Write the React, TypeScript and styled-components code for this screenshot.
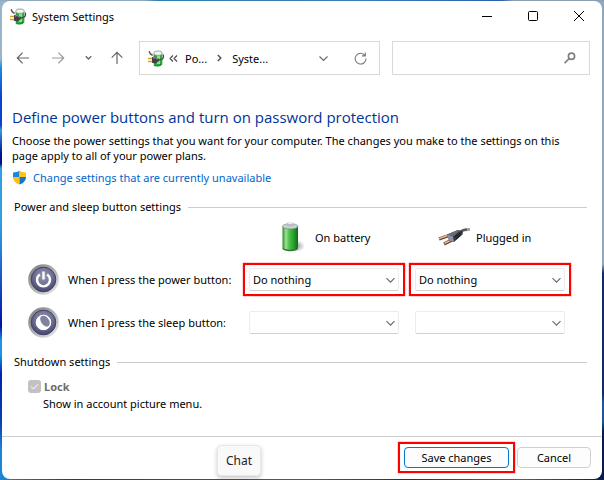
import React from "react";
import styled, { createGlobalStyle } from "styled-components";

const GlobalStyle = createGlobalStyle`
  *, *::before, *::after { box-sizing: border-box; }
  body {
    margin: 0;
    font-family: "Noto Sans", "Open Sans", sans-serif;
    font-size: 11px;
    line-height: 15px;
    color: #000;
  }
  button, input, select { font: inherit; color: inherit; }
  svg { flex: none; }
`;

const Desktop = styled.div`
  min-height: 100vh;
  display: flex;
  padding: 1px 2px;
  background:
    linear-gradient(#8ea9bd 0 55%, #0b2a66 57% 82%, #1d5596 84% 88%, #0a1c4c 90%) right / 50% calc(100% - 2px) no-repeat,
    linear-gradient(#9ab4c9 0 12%, #1c8ce0 14%, #0c42d0 20% 26%, #3a9ade 27%, #00128a 32%, #00128a 34%, #2f9fe0 35% 46%, #2a7fd8 52%, #0010a8 68%, #1a96e4 71% 74%, #0020b0 78%, #0a3fb0 88%, #1c86d4 94%) left / 50% calc(100% - 2px) no-repeat,
    linear-gradient(90deg, #8fa9bf 0 24%, #2f7fae 26%, #3c7ab8 60%, #2c5fae 83%, #8b9fb2 85%) top / 100% 50% no-repeat,
    linear-gradient(90deg, #2a80c4, #2c3866 12%, #3a5c9c 50%, #22305c 68%, #2f68ae 86%, #101c40);
`;

const Window = styled.main`
  flex: 1;
  min-width: 0;
  display: flex;
  flex-direction: column;
  background: #fff;
  border-radius: 8px;
`;

const TitleBar = styled.header`
  display: flex;
  align-items: center;
  height: 30px;
  padding-left: 8px;
`;

const WindowTitle = styled.span`
  flex: 1;
  margin-left: 5px;
`;

const PlainButton = styled.button<{ $width: number }>`
  width: ${(p) => p.$width}px;
  height: 28px;
  padding: 0;
  border: 0;
  background: transparent;
  display: flex;
  flex: none;
  align-items: center;
  justify-content: center;
`;

const NavBar = styled.nav`
  display: flex;
  align-items: center;
  padding: 10px 12px 0 6px;
`;

const AddressBar = styled.div`
  flex: 241 1 241px;
  min-width: 0;
  height: 34px;
  margin-left: 4px;
  display: flex;
  align-items: center;
  padding-left: 8px;
  border: 1px solid #d9d9d9;
`;

const Crumb = styled.a`
  color: #000;
  text-decoration: none;
  white-space: nowrap;
`;

const Separator = styled.span`
  display: flex;
  justify-content: center;
  width: 25px;
`;

const Overflow = styled(Separator)`
  width: 20px;
  padding-right: 3px;
`;

const Spacer = styled.span`
  flex: 1;
`;

const SearchBox = styled.label`
  flex: 198 1 198px;
  min-width: 0;
  height: 34px;
  margin-left: 12px;
  display: flex;
  align-items: center;
  padding-right: 13px;
  border: 1px solid #d9d9d9;
`;

const SearchInput = styled.input`
  flex: 1;
  min-width: 0;
  border: 0;
  outline: 0;
  padding: 0 8px;
  background: transparent;
`;

const Content = styled.section`
  flex: 1;
  padding: 30px 12px 24px 10px;
`;

const Heading = styled.h1`
  margin: 0;
  font-family: "Open Sans", sans-serif;
  font-size: 15px;
  line-height: 24px;
  font-weight: 400;
  color: #003399;
`;

const Intro = styled.p`
  margin: 4px 16px 0 0;
`;

const AdminLink = styled.a`
  display: flex;
  align-items: center;
  gap: 6px;
  margin-top: 7px;
  color: #0066cc;
  text-decoration: none;
`;

const SectionTitle = styled.h2<{ $top: number }>`
  display: flex;
  align-items: center;
  gap: 7px;
  margin: ${(p) => p.$top}px 3px 0 2px;
  font-size: 11px;
  line-height: 16px;
  font-weight: 400;

  &::after {
    content: "";
    flex: 1;
    height: 1px;
    background: #cdcdcd;
  }
`;

const SettingsGrid = styled.div`
  display: grid;
  grid-template-columns: 205px minmax(0, 150px) minmax(0, 150px);
  grid-template-rows: 42px 43px 43px;
  column-gap: 16px;
  align-items: center;
  margin: 1px 0 0 16px;
`;

const ColumnHeader = styled.div<{ $indent: number; $gap: number }>`
  display: flex;
  align-items: center;
  gap: ${(p) => p.$gap}px;
  padding-left: ${(p) => p.$indent}px;
  white-space: nowrap;
`;

const RowLabel = styled.div`
  display: flex;
  align-items: center;
  gap: 8px;
  white-space: nowrap;
`;

const Highlighted = styled.div<{ $on?: boolean }>`
  position: relative;
  min-width: 0;

  &::after {
    content: "";
    display: ${(p) => (p.$on ? "block" : "none")};
    position: absolute;
    inset: -5px -6px;
    border: 2px solid #ff0000;
    box-shadow: 0 0 1px #ff0000;
    pointer-events: none;
  }
`;

const Select = styled.select`
  display: block;
  width: 100%;
  height: 23px;
  padding: 0 24px 0 3px;
  appearance: none;
  border: 1px solid #ececec;
  border-bottom-color: #d0d0d0;
  border-radius: 2px;
  background: #fff;
  opacity: 1;
`;

const SelectArrow = styled.svg`
  position: absolute;
  right: 4px;
  top: 9px;
  pointer-events: none;
`;

const LockLabel = styled.label`
  display: flex;
  align-items: center;
  gap: 3px;
  margin: 9px 0 0 16px;
  font-weight: 700;
  color: #6d6d6d;
`;

const Checkbox = styled.input`
  appearance: none;
  width: 13px;
  height: 13px;
  margin: 0;
  border-radius: 3px;
  background: #c2c2c2 url("data:image/svg+xml,%3Csvg xmlns='http://www.w3.org/2000/svg' viewBox='0 0 13 13'%3E%3Cpath d='M3 6.5 5.5 9 10 4.3' fill='none' stroke='white'/%3E%3C/svg%3E");
`;

const LockHint = styled.p`
  margin: 2px 0 0 31px;
`;

const Footer = styled.footer`
  position: relative;
  display: flex;
  justify-content: flex-end;
  gap: 8px;
  padding: 10px 11px 11px;
  border-top: 1px solid #cdcdcd;
`;

const ActionButton = styled.button<{ $width: number; $primary?: boolean }>`
  display: block;
  width: ${(p) => p.$width}px;
  height: 21px;
  padding: 0;
  border: 1px solid ${(p) => (p.$primary ? "#0078d4" : "#d0d0d0")};
  border-radius: 4px;
  background: #fdfdfd;
  white-space: nowrap;
`;

const Tooltip = styled.div`
  position: absolute;
  left: 215px;
  top: 8px;
  padding: 7px 8px;
  border-radius: 4px;
  background: #f9f9f9;
  color: #222;
  font-size: 12px;
  border: 1px solid #e8e8e8;
  box-shadow: 0 2px 4px rgba(0, 0, 0, 0.22);
`;

const PowerOptionsIcon = () => (
  <svg width="17" height="17" viewBox="0 0 17 17" aria-hidden="true">
    <path d="M6 3.5v10c0 3 8 3 8 0v-10z" fill="#26b13c" stroke="#5f8767" strokeWidth=".8" />
    <path d="M9 5h3v9H9z" fill="#88e28e" />
    <ellipse cx="10" cy="3.2" rx="4.2" ry="2.2" fill="#eef4ef" stroke="#849087" strokeWidth=".8" />
    <path d="M1.2 1.2c.3 2.2 1.4 3.4 3.5 4.2" fill="none" stroke="#555" strokeWidth="1.3" />
    <path d="M0 8.5h5M0 11.5h5" stroke="#d9a21b" strokeWidth="1.6" />
    <path d="M4 7.2 7 6.6l4 2.4v2L7.5 13.4l-3.500-.6z" fill="#3f4144" />
    <path d="M5 8 7.500 7.600l2.500 1.600" stroke="#a4a8aa" fill="none" />
    <path d="M11 10c5-.4 5-3.500 4.200-5.400" fill="none" stroke="#4b504c" strokeWidth="1.3" />
    <path d="M6 14.600c1 1.700 6 1.700 7.600-.8" fill="none" stroke="#10962c" strokeWidth="1.6" />
  </svg>
);

const Arrow = ({ rotate = 0, color }: { rotate?: number; color: string }) => (
  <svg width="14" height="14" viewBox="0 0 14 14" fill="none" stroke={color} strokeWidth="1.2" aria-hidden="true">
    <path d="M13 7H1.3M6.6 1.7 1.3 7l5.3 5.3" transform={`rotate(${rotate} 7 7)`} />
  </svg>
);

const ShieldIcon = () => (
  <svg width="15" height="15" viewBox="0 0 15 15" aria-hidden="true">
    <path d="M7.5.5C5.8 2 3.6 2.4 1 2.4V7h6.5z" fill="#1c86dc" />
    <path d="M7.5.5C9.2 2 11.4 2.4 14 2.4V7H7.5z" fill="#fcc515" />
    <path d="M1 7c.2 4 2.8 6.2 6.5 7.6V7z" fill="#fcbf12" />
    <path d="M14 7c-.2 4-2.8 6.2-6.5 7.6V7z" fill="#1676c8" />
  </svg>
);

const BatteryIcon = () => (
  <svg width="24" height="32" viewBox="0 0 24 32" aria-hidden="true">
    <defs>
      <linearGradient id="cell">
        <stop offset="0" stopColor="#2c8a2a" />
        <stop offset=".22" stopColor="#9be491" />
        <stop offset=".42" stopColor="#4fc14b" />
        <stop offset=".75" stopColor="#239d2a" />
        <stop offset="1" stopColor="#14661c" />
      </linearGradient>
      <radialGradient id="shade">
        <stop offset="0" stopColor="#777" stopOpacity=".7" />
        <stop offset="1" stopColor="#777" stopOpacity="0" />
      </radialGradient>
    </defs>
    <ellipse cx="16" cy="25" rx="8" ry="6" fill="url(#shade)" />
    <path d="M1.5 5v22c1 3.6 14.5 3.6 15.5 0V5z" fill="url(#cell)" />
    <path d="M1.5 26c1 3.6 14.5 3.6 15.5 0v1.5c-1 3.6-14.5 3.6-15.5 0z" fill="#347339" />
    <ellipse cx="9.2" cy="5.3" rx="7.7" ry="2.6" fill="#cdd2d6" stroke="#7d8b80" strokeWidth=".7" />
    <path d="M5 4.5 6.500 1.800c1.500-1 4-1 5.500 0l1.500 2.700c-2 1.500-6.500 1.500-8.500 0z" fill="#b9bdc8" />
    <ellipse cx="9.2" cy="2" rx="2.7" ry="1" fill="#eef0f3" />
  </svg>
);

const PlugIcon = () => (
  <svg width="32" height="18" viewBox="0 0 32 18" aria-hidden="true">
    <path d="M22 4c3-3 6-2.6 10-2.5" fill="none" stroke="#a5a5aa" strokeWidth="3" />
    <path d="M22 4.5c2.5-2.6 4-3 7-3" fill="none" stroke="#55565c" strokeWidth="2" />
    <path d="m1 11 10-3.5M6 16l9-4.5" stroke="#704331" strokeWidth="3.4" />
    <path d="m1 10.6 9-3.3M6.5 15.3l8-4" stroke="#f0c4a5" strokeWidth="1.3" />
    <path d="M9 6.5 20 2l5 1.500-.5 3L16 14l-5-1.500-1-4z" fill="#34363f" />
    <path d="m9 6.5 6 2 7.500-6L20 2z" fill="#686b78" />
    <path d="m9 6.5 6 2 1 5.500-5-1.500z" fill="#8a91a3" />
    <path d="m17 9 5-4M18 11l4.5-4" stroke="#15161b" strokeWidth="1" />
  </svg>
);

const RoundIcon = ({ sleep }: { sleep?: boolean }) => {
  const id = sleep ? "sleep" : "power";
  return (
    <svg width="32" height="32" viewBox="0 0 32 32" aria-hidden="true">
      <defs>
        <linearGradient id={`${id}-rim`} x1="0" y1="0" x2="1" y2="1">
          <stop offset="0" stopColor="#777" />
          <stop offset=".45" stopColor="#aaa" />
          <stop offset="1" stopColor="#efefef" />
        </linearGradient>
        <radialGradient id={`${id}-face`} cx=".5" cy=".35" r=".65">
          <stop offset="0" stopColor="#9b9cb9" />
          <stop offset=".65" stopColor="#66678b" />
          <stop offset="1" stopColor="#44456a" />
        </radialGradient>
      </defs>
      <circle cx="15.5" cy="15.5" r="15.3" fill={`url(#${id}-rim)`} />
      <circle cx="15.5" cy="15.5" r="12.3" fill={`url(#${id}-face)`} stroke="#3f4068" strokeWidth="1" />
      {sleep ? (
        <>
          <circle cx="15.5" cy="15.5" r="7.6" fill="#fff" />
          <ellipse cx="17" cy="14" rx="4" ry="6.2" fill="#80829f" transform="rotate(-35 17 14)" />
          <circle cx="15.5" cy="15.5" r="7.2" fill="none" stroke="#fff" strokeWidth=".9" />
        </>
      ) : (
        <g fill="none" stroke="#fff" strokeWidth="2.4">
          <path d="M11.8 10.5a6.5 6.5 0 1 0 7.4 0" />
          <path d="M15.5 7.5v8" />
        </g>
      )}
    </svg>
  );
};

const settings = [
  { id: "power", label: "When I press the power button:", value: "Do nothing", sleep: false },
  { id: "sleep", label: "When I press the sleep button:", value: "", sleep: true },
];

const Setting = ({ label, value }: { label: string; value: string }) => (
  <Highlighted $on={value !== ""}>
    <Select aria-label={label} defaultValue={value} disabled={value === ""}>
      <option value={value}>{value}</option>
    </Select>
    <SelectArrow width="9" height="7" viewBox="0 0 9 7" fill="none" stroke="#666" strokeWidth="1.1">
      <path d="m.5 1.2 4 4 4-4" />
    </SelectArrow>
  </Highlighted>
);

export default function App() {
  return (
    <>
      <GlobalStyle />
      <Desktop>
        <Window>
          <TitleBar>
            <PowerOptionsIcon />
            <WindowTitle>System Settings</WindowTitle>
            <PlainButton $width={46} aria-label="Minimize">
              <svg width="10" height="10" viewBox="0 0 10 10" stroke="#000">
                <path d="M0 5.5h10" />
              </svg>
            </PlainButton>
            <PlainButton $width={46} aria-label="Maximize">
              <svg width="10" height="10" viewBox="0 0 10 10" fill="none" stroke="#000">
                <rect x=".5" y=".5" width="9" height="9" rx="1" />
              </svg>
            </PlainButton>
            <PlainButton $width={46} aria-label="Close">
              <svg width="10" height="10" viewBox="0 0 10 10" stroke="#000">
                <path d="m0 0 10 10M10 0 0 10" />
              </svg>
            </PlainButton>
          </TitleBar>
          <NavBar aria-label="Location">
            <PlainButton $width={30} aria-label="Back">
              <Arrow color="#666" />
            </PlainButton>
            <PlainButton $width={40} aria-label="Forward">
              <Arrow rotate={180} color="#999" />
            </PlainButton>
            <PlainButton $width={21} aria-label="Recent locations">
              <svg width="7" height="6" viewBox="0 0 7 6" fill="none" stroke="#666" strokeWidth="1.4">
                <path d="m.8 1.3 2.7 2.7 2.7-2.7" />
              </svg>
            </PlainButton>
            <PlainButton $width={36} aria-label="Up">
              <Arrow rotate={90} color="#666" />
            </PlainButton>
            <AddressBar>
              <PowerOptionsIcon />
              <Overflow>
                <svg width="9" height="7" viewBox="0 0 9 7" fill="none" stroke="#444" strokeWidth="1.1">
                  <path d="M4 .5 1 3.5l3 3M8 .5l-3 3 3 3" />
                </svg>
              </Overflow>
              <Crumb href="#power">Po...</Crumb>
              <Separator>
                <svg width="5" height="8" viewBox="0 0 5 8" fill="none" stroke="#555" strokeWidth="1.5">
                  <path d="m.8 1 3 3-3 3" />
                </svg>
              </Separator>
              <Crumb href="#system">Syste...</Crumb>
              <Spacer />
              <PlainButton $width={37} aria-label="Previous locations">
                <svg width="9" height="9" viewBox="0 0 9 9" fill="none" stroke="#666" strokeWidth="1.1">
                  <path d="m.5 2.5 4 4 4-4" />
                </svg>
              </PlainButton>
              <PlainButton $width={37} aria-label="Refresh">
                <svg width="13" height="13" viewBox="0 0 13 13" fill="none" stroke="#777" strokeWidth="1.1">
                  <path d="M11 3.5A5.4 5.4 0 1 0 12 6.500M11.300.5v3.400H8" />
                </svg>
              </PlainButton>
            </AddressBar>
            <SearchBox>
              <SearchInput type="search" aria-label="Search" />
              <svg width="12" height="12" viewBox="0 0 12 12" fill="none" stroke="#808080" strokeWidth="1.7">
                <circle cx="7.5" cy="4.3" r="3.1" />
                <path d="M5.3 6.500.6 11.200" />
              </svg>
            </SearchBox>
          </NavBar>
          <Content>
            <Heading>Define power buttons and turn on password protection</Heading>
            <Intro>
              Choose the power settings that you want for your computer. The changes you make to the settings on this
              page apply to all of your power plans.
            </Intro>
            <AdminLink href="#unlock">
              <ShieldIcon />
              Change settings that are currently unavailable
            </AdminLink>
            <SectionTitle $top={14}>Power and sleep button settings</SectionTitle>
            <SettingsGrid>
              <span />
              <ColumnHeader $indent={32} $gap={10}>
                <BatteryIcon />
                On battery
              </ColumnHeader>
              <ColumnHeader $indent={23} $gap={6}>
                <PlugIcon />
                Plugged in
              </ColumnHeader>
              {settings.map((s) => (
                <React.Fragment key={s.id}>
                  <RowLabel>
                    <RoundIcon sleep={s.sleep} />
                    {s.label}
                  </RowLabel>
                  <Setting label={`${s.label} On battery`} value={s.value} />
                  <Setting label={`${s.label} Plugged in`} value={s.value} />
                </React.Fragment>
              ))}
            </SettingsGrid>
            <SectionTitle $top={10}>Shutdown settings</SectionTitle>
            <LockLabel>
              <Checkbox type="checkbox" defaultChecked disabled />
              Lock
            </LockLabel>
            <LockHint>Show in account picture menu.</LockHint>
          </Content>
          <Footer>
            <Tooltip role="tooltip">Chat</Tooltip>
            <Highlighted $on>
              <ActionButton $width={105} $primary>
                Save changes
              </ActionButton>
            </Highlighted>
            <ActionButton $width={74}>Cancel</ActionButton>
          </Footer>
        </Window>
      </Desktop>
    </>
  );
}
